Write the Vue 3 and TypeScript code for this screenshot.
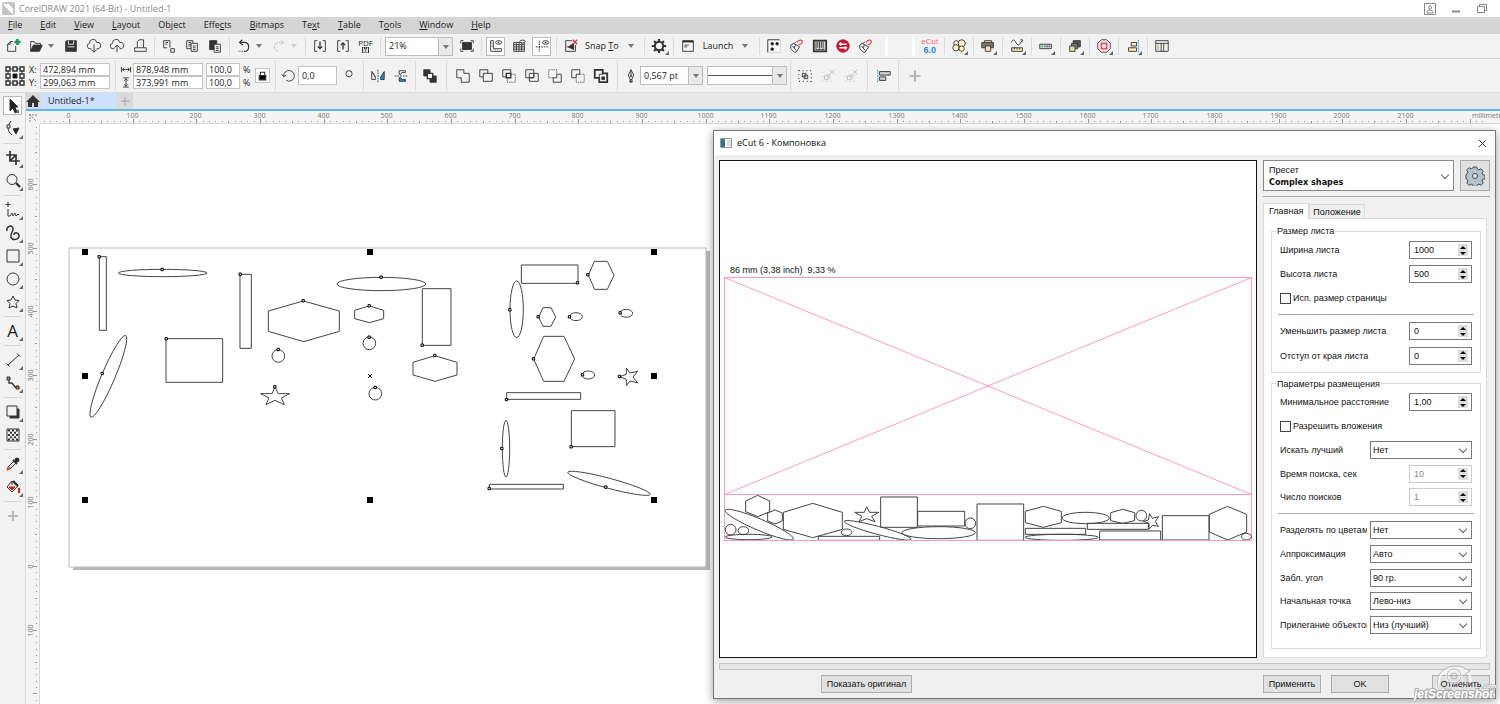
<script setup lang="ts">
import { ref } from 'vue'

interface Item {
  kind: 'icon' | 'sep' | 'arrow' | 'gap' | 'zoom' | 'text' | 'pdf' | 'ecut'
  icon?: string
  label?: string
  on?: boolean
  fly?: boolean
  dim?: boolean
}

const icon = (name: string, label: string, extra: Partial<Item> = {}): Item => ({ kind: 'icon', icon: name, label, ...extra })
const sep: Item = { kind: 'sep' }
const arrow: Item = { kind: 'arrow', label: 'More' }

const menus: [string, string, string][] = [
  ['', 'F', 'ile'], ['', 'E', 'dit'], ['', 'V', 'iew'], ['', 'L', 'ayout'], ['Ob', 'j', 'ect'], ['Effe', 'c', 'ts'],
  ['', 'B', 'itmaps'], ['Te', 'x', 't'], ['', 'T', 'able'], ['T', 'o', 'ols'], ['', 'W', 'indow'], ['', 'H', 'elp'],
]

const icons: Record<string, string> = {
  newDoc: '<path d="M9 4H6L3 7v8h9V9M6 4v3H3"/><path d="M14 1v7M10.500 4.500h7" stroke="#12a150" stroke-width="3"/>',
  open: '<path d="M3 15V4h4l1 2h6v2"/><path d="M3 15l3-7h10l-3 7z" fill="#333"/>',
  save: '<path d="M4 3h11v12H3V4z" fill="#333"/><path d="M6 3v4h6V3M5 10h8" stroke="#f2f2f2"/>',
  cloudDown: '<path d="M6 12H5a3 3 0 0 1-1-6 4 4 0 0 1 8-1 3.500 3.500 0 0 1 2 7h-2"/><path d="M9 7v9M6 13l3 3 3-3"/>',
  cloudUp: '<path d="M6 12H5a3 3 0 0 1-1-6 4 4 0 0 1 8-1 3.500 3.500 0 0 1 2 7h-2"/><path d="M9 16V8M6 11l3-3 3 3"/>',
  print: '<path d="M3 15h13v-4H3zM6 11V4l2-2h5v9"/>',
  cut: '<path d="M3 3h7v6M3 3v8h4M5 5h3M5 7h2M11 12h4v4h-4zM9 10h2"/>',
  copy: '<path d="M3 3h7v9H3zM5 5h3M5 7h3M5 9h3"/><path d="M8 6h7v9H8zM10 9h3M10 11h3M10 13h3" fill="#f2f2f2"/>',
  paste: '<path d="M3 3h8v10H3z" fill="#333"/><path d="M8 7h7v9H8zM10 10h3M10 12h3M10 14h3" fill="#f2f2f2"/>',
  undo: '<path d="M7 2L4 5l4 3M4 5h5c7 0 7 10 0 10" stroke-width="1.300"/><path d="M8 15H3" stroke-dasharray="1 1"/>',
  redo: '<path d="M11 2l3 3-4 3M14 5H9c-7 0-7 10 0 10" stroke-dasharray="2 1"/>',
  imp: '<path d="M6 3H3v12h3M12 3h3v12h-3"/><path d="M9 4v8M6.500 9.500L9 12l2.500-2.500" stroke-width="1.500"/>',
  exp: '<path d="M6 3H3v12h3M12 3h3v12h-3"/><path d="M9 13V5M6.500 8L9 5.500 11.500 8" stroke-width="1.500"/>',
  full: '<path d="M2 6V3h3M13 3h3v3M16 12v3h-3M5 15H2v-3"/><path d="M4 5h10v8H4z" fill="#333"/>',
  rulers: '<path d="M3 3h3v9h9v3H3zM4 6h1M4 9h1M8 13v1M11 13v1"/><ellipse cx="12" cy="5" rx="3.500" ry="2"/><circle cx="12" cy="5" r=".6"/>',
  grid: '<path d="M3 5h12v10H3zM3 7.500h12M3 10h12M3 12.500h12M6 5v10M9 5v10M12 5v10"/><ellipse cx="13" cy="4" rx="3" ry="1.600" fill="#f2f2f2"/>',
  guides: '<path d="M2 10h14M6 3v13" stroke-dasharray="2 1"/><ellipse cx="13" cy="5" rx="3.500" ry="2"/><circle cx="13" cy="5" r=".6"/>',
  snapOff: '<path d="M10 3H3v12h11V8"/><path d="M12 6L6 10l6 3zM4 10h3" fill="#333"/><path d="M11 2l5 5M16 2l-5 5" stroke="#f0332f" stroke-width="1.400"/>',
  gear: '<circle cx="9" cy="9" r="4.700" stroke-width="2.200"/><path d="M9 1v3M9 14v3M1 9h3M14 9h3M3.500 3.500l2 2M12.500 12.500l2 2M3.500 14.500l2-2M12.500 5.500l2-2" stroke-width="2.400"/>',
  launch: '<path d="M3 3h12v12H3z"/><path d="M3 4h12" stroke-width="2"/><path d="M5 8h5M5 10h3"/>',
  dots: '<path d="M2 16V2h14v14z" fill="#fff" stroke="#ccc"/><path d="M2 16V2h13"/><g fill="#000"><circle cx="7" cy="6.500" r="1.500"/><circle cx="12.500" cy="6.500" r="1.500"/><circle cx="7" cy="12.500" r="1.500"/></g>',
  plug: '<path d="M2 8l3-2 7 4-4 6H6l-4-4zM4 9l4 5M7 8l-1 3M8 4l-3 3"/><path d="M9 5c2-4 7-3 6 0-1 2-3 3-4 2" stroke="#ef4444" stroke-width="1.300"/>',
  barcode: '<path d="M2 3h14v12H2z" stroke-width="2" fill="#ddd"/><path d="M4.500 4v8M6.500 4v7M8.500 4v8M10.500 4v7M12.500 4v8M4 13h10"/>',
  swap: '<circle cx="9" cy="9" r="7" fill="#c4122f" stroke="#c4122f"/><path d="M5 7h8M7 5L5 7l2 1.500M5 11h8M11 9.500l2 1.500-2 2" stroke="#fff" stroke-width="1.500"/>',
  circles: '<g fill="#fff3c4"><circle cx="6" cy="6" r="3"/><circle cx="12" cy="6" r="4"/><circle cx="5.500" cy="11" r="3.500"/><circle cx="12" cy="12" r="3"/></g>',
  printer2: '<path d="M2 5h13v6H2z" fill="#777"/><path d="M5 3h8v2H5zM6 9h6v6H6z" fill="#f8e9b0"/>',
  measure: '<path d="M2 5l3-3c2 0 3 6 6 6l4-5M13 2h2v2"/><path d="M3 11h12v4H3zM6 11v2M9 11v2M12 11v2" fill="#f8e9b0"/>',
  leds: '<path d="M2 7h13v5H2z" fill="#ddd"/><path d="M4 9.500h1.500M7 9.500h1.500" stroke="#1c9b57" stroke-width="2"/><path d="M9.500 9.500H11M12 9.500h1.500" stroke="#713a8c" stroke-width="2"/>',
  stack: '<path d="M7 3h8v7H7z" fill="#555"/><path d="M5 6h7v6H5z" fill="#777"/><path d="M3 9h6v6H3z" fill="#e9dfae"/>',
  octagon: '<path d="M6 2h6l4 4v6l-4 4H6l-4-4V6z"/><path d="M6 6h6v6H6z" fill="#fff" stroke="#ff4560" stroke-width="1.800"/>',
  align2: '<path d="M15 2v14" stroke="#1691d0" stroke-dasharray="2 1"/><path d="M7 5h6v4H7zM4 11h9v4H4z" fill="#f8e9b0"/>',
  table: '<path d="M2 3h14v12H2zM2 6h14M8 6v9M11 6v9"/><path d="M3 7h3v7H3z" fill="#d5cdb5" stroke="none"/>',
  origin: '<path d="M3 3h14v14H3z"/><g fill="#f2f2f2"><path d="M1 1h4v4H1zM8 1h4v4H8zM15 1h4v4h-4zM1 8h4v4H1zM15 8h4v4h-4zM1 15h4v4H1zM8 15h4v4H8zM15 15h4v4h-4z" stroke-width="1.400"/></g><path d="M8 8h4v4H8z" fill="#000"/>',
  rotate: '<path d="M3 9a6 6 0 1 1 3 5M1 7l2 3 3-2"/>',
  mirrorH: '<path d="M9 2v14" stroke-dasharray="2 1"/><path d="M2 4v9h4v-3zM2 4l4 6"/><path d="M16 4v9h-4v-3z" fill="#1691d0"/>',
  mirrorV: '<path d="M2 9h14" stroke-dasharray="2 1"/><path d="M14 3H7v4h2l1-2h4z"/><path d="M14 15H7v-4h2l1 2h4z" fill="#1691d0"/>',
  order: '<path d="M2 2h7v7H2zM9 9h7v7H9z" fill="#333"/><path d="M6 6h6v6H6z" fill="#f2f2f2" stroke-width="1.500"/>',
  weld: '<path d="M2 2h8v4h6v10H7v-5H2z"/>',
  trim: '<path d="M6 10H2V2h9v4"/><path d="M6 6h10v9H6z"/>',
  intersect: '<path d="M6 10H2V2h9v4"/><path d="M6 6h5v5H6z" stroke-width="1.500"/><path d="M11 7h5v9H7v-5" stroke-dasharray="1 1"/>',
  simplify: '<path d="M2 2h9v9H2z"/><path d="M6 6h10v9H6zM6 11h5V6"/>',
  front: '<path d="M7 11H2V2h9v4" stroke-dasharray="1 1"/><path d="M11 7h5v9H7v-5h4z"/>',
  back: '<path d="M7 11H2V2h9v5H7z"/><path d="M11 7h5v9H7v-5" stroke-dasharray="1 1"/>',
  boundary: '<path d="M2 2h9v4h5v10H7v-5H2z" stroke-width="2"/><path d="M10 10h3v3h-3z" fill="#333"/><path d="M7 10V7h4"/>',
  pen: '<path d="M9 2L6 8l2 5h2l2-5zM9 2v6M7 15h4M8 13v3h2v-3"/><circle cx="9" cy="9" r="1"/>',
  group: '<path d="M2 3h14v12H2z" stroke-dasharray="1 3.300" stroke-width="1.300"/><path d="M6 6h4v4H6zM8 8h4v4H8z"/>',
  ungroup: '<path d="M3 4v11h11" stroke-dasharray="1 4"/><path d="M5 9h4v4H5zM7 8h4v4M11 2l5 5M16 2l-5 5"/>',
  alignL: '<path d="M2 2v14" stroke="#1691d0" stroke-dasharray="2 1"/><path d="M4 4h12v4H4zM4 10h7v4H4z" fill="#ccc"/>',
  plus: '<path d="M9 4v10M4 9h10" stroke="#aaa" stroke-width="1.500"/>',
  pick: '<path d="M6 2v12l3-3 2 5 2-1-2-5h3z" fill="#222"/>',
  shape: '<path d="M7 1c-4 5-4 10 1 14"/><path d="M3 5h3v3H3z" fill="#f2f2f2"/><path d="M9 9l6-1-3 6z" fill="#222"/>',
  crop: '<path d="M6 2v10h10M2 6h10v10M6 12l6-6" stroke-width="1.700"/>',
  lens: '<circle cx="8" cy="7.500" r="5"/><path d="M12 11l4 4" stroke-width="2.400"/>',
  freehand: '<path d="M4 1v5M1.500 3.500h5M4 8v7h2c1 0 1-3 2-3s0 3 1 3 1-3 2-3 0 3 1 3l2-2 1 1"/>',
  artistic: '<path d="M3 7c-1-5 6-7 6-2 0 3-3 5-2 8 1 4 9 3 8-2-1-3-5-3-5 0" stroke-width="1.500"/>',
  rect: '<path d="M3 3h12v12H3z"/>',
  ellipse: '<circle cx="9" cy="9" r="6"/>',
  star: '<path d="M9 3l2 4 4 .5-3 3 1 4.500-4-2-4 2 1-4.500-3-3L7 7z"/>',
  line: '<path d="M4 14L15 4M2.500 12.500l3 3M13 2.500l3 3"/>',
  connector: '<path d="M5 5v4h3l3 4h3" stroke-width="1.300"/><path d="M3 3h3v3H3zM12 12h3v3h-3z" fill="#f26522"/>',
  shadow: '<path d="M6 6h9v9H6z" fill="#333"/><path d="M3 3h10v10H3z" fill="#f2f2f2"/>',
  checker: '<path d="M3 3h12v12H3z"/><path d="M4 4.500h10M4 9h10M4 13.500h10" stroke-width="2" stroke-dasharray="2 2"/><path d="M6 6.700h8M6 11.300h8" stroke-width="2" stroke-dasharray="2 2"/>',
  dropper: '<path d="M3 15l1-3 6-6 2 2-6 6z"/><path d="M3 15l3-3" stroke="#f26522" stroke-width="2"/><circle cx="13" cy="5" r="2" fill="#222"/><path d="M9 5l4 4" stroke-width="2"/>',
  fill: '<path d="M8 3l6 5-6 6-5-5zM8 3v4"/><path d="M5 9h6l-3 3z" fill="#f01010" stroke="#f01010"/><path d="M15 10v5" stroke="#f01010" stroke-width="2"/><path d="M9 3l5 5" stroke-width="2.400"/>',
}

const standardBar: Item[] = [
  icon('newDoc', 'New'), icon('open', 'Open'), arrow, icon('save', 'Save'), icon('cloudDown', 'Cloud download'),
  icon('cloudUp', 'Cloud upload'), icon('print', 'Print'), sep, icon('cut', 'Cut'), icon('copy', 'Copy'), icon('paste', 'Paste'), sep,
  icon('undo', 'Undo'), arrow, icon('redo', 'Redo', { dim: true }), { ...arrow, dim: true }, sep,
  icon('imp', 'Import'), icon('exp', 'Export'), { kind: 'pdf', label: 'PDF' }, sep, { kind: 'zoom' }, icon('full', 'Full screen'), sep,
  icon('rulers', 'Rulers', { on: true }), icon('grid', 'Grid'), icon('guides', 'Guidelines', { on: true }), sep,
  icon('snapOff', 'Snap off'), { kind: 'text', label: 'Snap To' }, arrow, { kind: 'gap' }, sep, icon('gear', 'Options', { fly: true }), sep,
  icon('launch', 'Launch'), { kind: 'text', label: 'Launch' }, arrow, { kind: 'gap' }, sep,
  icon('dots', 'Dots'), icon('plug', 'Plug-in'), icon('barcode', 'Barcode'), icon('swap', 'Swap'), icon('plug', 'Second plug-in'),
]
const macroBar: Item[] = [
  { kind: 'ecut', label: 'eCut 6.0' }, sep, icon('circles', 'Nesting', { fly: true }), sep, icon('printer2', 'Plot', { fly: true }), sep,
  icon('measure', 'Measure', { fly: true }), sep, icon('leds', 'Lights', { fly: true }), sep, icon('stack', 'Volume', { fly: true }), sep,
  icon('octagon', 'Contour', { fly: true }), sep, icon('align2', 'Arrange', { fly: true }), sep, icon('table', 'Report'),
]
const tools: Item[] = [
  icon('pick', 'Pick', { on: true, fly: true }), icon('shape', 'Shape', { fly: true }), sep, icon('crop', 'Crop', { fly: true }), icon('lens', 'Zoom', { fly: true }), sep,
  icon('freehand', 'Freehand', { fly: true }), icon('artistic', 'Artistic media', { fly: true }), icon('rect', 'Rectangle', { fly: true }),
  icon('ellipse', 'Ellipse', { fly: true }), icon('star', 'Polygon', { fly: true }), sep, { kind: 'text', label: 'A', fly: true }, sep,
  icon('line', 'Dimension', { fly: true }), icon('connector', 'Connector', { fly: true }), sep, icon('shadow', 'Drop shadow', { fly: true }), icon('checker', 'Transparency'), sep,
  icon('dropper', 'Eyedropper', { fly: true }), icon('fill', 'Fill', { fly: true }), sep, icon('plus', 'Add tool'),
]
const shaping = ['weld', 'trim', 'intersect', 'simplify', 'front', 'back', 'boundary']

/* Rulers: 100 mm spans 63.67 px at the current zoom */
const unit = 63.67
const allH = Array.from({ length: 227 }, (_, i) => ({ x: Math.round(29 + ((i - 4) * unit) / 10) + 0.5, n: (i - 4) * 10 }))
const vTicks = Array.from({ length: 91 }, (_, i) => ({ y: Math.round(443 - ((i - 21) * unit) / 10) - 0.5, n: (i - 21) * 10 }))

/* Drawing geometry, three drawing units per pixel */
type Pt = [number, number]
interface Shape { t: 'r' | 'e' | 'p'; a?: number[]; p?: string; rot?: number; n?: Pt }
const r = (x1: number, y1: number, x2: number, y2: number, n?: Pt): Shape => ({ t: 'r', a: [x1, y1, x2 - x1, y2 - y1], n })
const e = (cx: number, cy: number, rx: number, ry: number, n?: Pt, rot = 0): Shape => ({ t: 'e', a: [cx, cy, rx, ry], n, rot })
const p = (pts: string, n?: Pt): Shape => ({ t: 'p', p: pts, n })

const leftShapes: Shape[] = [
  r(118, 50, 139, 271, [118, 51]), e(308, 99, 133, 11, [307, 89]), r(540, 103, 574, 325, [541, 103]), e(964, 132, 133, 20, [964, 112]),
  r(1087, 146, 1173, 316, [1087, 316]), r(318, 296, 488, 427, [319, 297]),
  p('730,183 838,213 838,274 731,305 625,274 625,213', [730, 183]),
  p('928,198 971,211 971,236 928,248 884,236 884,211', [928, 198]),
  p('1125,347 1191,367 1191,405 1125,424 1059,405 1059,367', [1125, 347]),
  e(655, 348, 19, 19, [655, 329]), e(928, 310, 19, 19, [928, 292]), e(946, 461, 19, 19, [946, 443]),
  p('645,441 655,461 689,461 664,474 673,494 645,481 618,494 627,474 602,461 636,461', [645, 441]),
  e(145, 409, 133, 20, [127, 401], -67),
]
const rightShapes: Shape[] = [
  r(154, 75, 324, 130, [323, 129]), p('355,106 373,64 412,64 432,106 412,148 374,148', [354, 105]), e(140, 208, 20, 85, [120, 210]),
  p('206,231 219,203 243,203 257,231 243,259 219,259', [205, 231]), e(318, 230, 19, 12, [299, 231]), e(469, 220, 19, 12, [451, 219]),
  p('191,357 221,289 282,289 314,357 282,424 221,424', [191, 357]), e(355, 405, 19, 12, [338, 405]),
  p('469,384 479,399 503,394 489,411 503,429 480,423 469,437 469,418 449,410 469,403', [449, 410]),
  r(110, 458, 332, 478, [110, 479]), r(304, 512, 435, 620, [304, 621]), e(108, 626, 11, 85, [96, 626]), r(58, 733, 280, 747, [58, 746]),
  e(417, 730, 128, 15, [408, 742], 15),
]
const nestA: Shape[] = [
  p('128,46 164,63 164,95 128,110 92,95 92,63'), p('180,90 202,99 202,123 180,132 158,123 158,99'),
  p('293,70 382,97 382,148 293,173 205,148 205,97'), e(133, 134, 111, 17, undefined, 23), e(47, 149, 16, 16), e(85, 152, 16, 12), e(101, 171, 70, 8),
  p('455,80 464,97 491,97 470,109 480,125 455,116 432,125 441,109 419,97 448,97'), e(488, 151, 104, 12, undefined, 15), e(395, 157, 16, 10),
  r(310, 169, 494, 181), r(497, 51, 607, 142), r(608, 94, 749, 138), e(766, 130, 16, 16), e(671, 158, 110, 18), r(786, 72, 926, 181),
]
const nestB: Shape[] = [
  p('130,79 184,94 184,128 130,142 76,128 76,94'), e(257, 114, 71, 17), p('368,88 404,98 404,122 368,130 332,122 332,98'), e(424, 107, 16, 16),
  p('449,101 457,115 476,110 466,124 475,139 458,136 447,147 447,130 430,124 445,120'), r(76, 145, 257, 163), r(262, 130, 445, 148),
  e(185, 172, 110, 9), r(299, 153, 482, 180), r(487, 107, 627, 180), p('683,79 740,103 740,156 683,180 628,156 628,103'), e(739, 170, 15, 10),
]
const canvasGroups = [{ at: 'translate(20 116)', shapes: leftShapes }, { at: 'translate(430 116)', shapes: rightShapes }]
const nestGroups = [{ at: 'translate(-5 319)', shapes: nestA }, { at: 'translate(280 319)', shapes: nestB }]
const handles: Pt[] = [[85, 252], [370, 252], [654, 252], [85, 376], [654, 376], [85, 500], [370, 500], [654, 500]]
const usage = '86 mm (3,38 inch)\u00a0 9,33 %'

type Row = { id: string; label: string; kind: 'spin' | 'check' | 'select' | 'hr'; value?: string; off?: boolean }
const sheetRows: Row[] = [
  { id: 'w', label: 'Ширина листа', kind: 'spin', value: '1000' }, { id: 'h', label: 'Высота листа', kind: 'spin', value: '500' },
  { id: 'page', label: 'Исп. размер страницы', kind: 'check' }, { id: 'hr1', label: '', kind: 'hr' },
  { id: 'shrink', label: 'Уменьшить размер листа', kind: 'spin', value: '0' }, { id: 'edge', label: 'Отступ от края листа', kind: 'spin', value: '0' },
]
const placeRows: Row[] = [
  { id: 'min', label: 'Минимальное расстояние', kind: 'spin', value: '1,00' }, { id: 'nest', label: 'Разрешить вложения', kind: 'check' },
  { id: 'best', label: 'Искать лучший', kind: 'select', value: 'Нет' }, { id: 'time', label: 'Время поиска, сек', kind: 'spin', value: '10', off: true },
  { id: 'count', label: 'Число поисков', kind: 'spin', value: '1', off: true }, { id: 'hr2', label: '', kind: 'hr' },
  { id: 'colors', label: 'Разделять по цветам', kind: 'select', value: 'Нет' }, { id: 'approx', label: 'Аппроксимация', kind: 'select', value: 'Авто' },
  { id: 'angle', label: 'Забл. угол', kind: 'select', value: '90 гр.' }, { id: 'start', label: 'Начальная точка', kind: 'select', value: 'Лево-низ' },
  { id: 'fit', label: 'Прилегание объектов', kind: 'select', value: 'Низ (лучший)' },
]
const groups = [{ title: 'Размер листа', rows: sheetRows }, { title: 'Параметры размещения', rows: placeRows }]
const tab = ref('main')
</script>

<template>
  <div class="app">
    <header class="title">
      <svg class="logo" viewBox="0 0 13 13"><rect width="13" height="13" rx="2" fill="#c4c4c4" /><path d="M2 2l9 9M5 2l6 6" stroke="#fff" stroke-width="2" /></svg>
      <span>CorelDRAW 2021 (64-Bit) - Untitled-1</span>
      <div class="win">
        <button aria-label="Account"><svg viewBox="0 0 12 12"><path d="M.5.5h11v11H.5z" /><circle cx="6" cy="4.500" r="1.500" /><path d="M3 10c0-4 6-4 6 0z" /></svg></button>
        <button aria-label="Minimize"><svg viewBox="0 0 12 12"><path d="M2 8.500h8" stroke-width="2" /></svg></button>
        <button aria-label="Restore"><svg viewBox="0 0 12 12"><path d="M1.500 3.500h7v6h-7zM3.500 3.500v-2h7v6h-2" /></svg></button>
      </div>
    </header>
    <nav class="menu">
      <button v-for="m in menus" :key="m.join('')">{{ m[0] }}<u>{{ m[1] }}</u>{{ m[2] }}</button>
    </nav>

    <div class="bar">
      <template v-for="(bar, b) in [standardBar, macroBar]" :key="b">
        <div v-if="b === 1" class="dock"></div>
        <template v-for="(it, i) in bar" :key="b + '-' + i">
          <i v-if="it.kind === 'sep'" class="sep"></i>
          <i v-else-if="it.kind === 'gap'" class="gap"></i>
          <button v-else-if="it.kind === 'arrow'" class="arrow" :class="{ dim: it.dim }" :aria-label="it.label"></button>
          <span v-else-if="it.kind === 'zoom'" class="combo zoom"><select aria-label="Zoom"><option>21%</option></select></span>
          <button v-else-if="it.kind === 'text'" class="word"><template v-if="it.label === 'Snap To'">Snap <u>T</u>o</template><template v-else>{{ it.label }}</template></button>
          <button v-else-if="it.kind === 'pdf'" class="cell pdf">PDF<svg viewBox="0 0 8 6"><path d="M1 0h6v6H1zM3 0v2h2V0M3 4h2" fill="none" stroke="#333" /></svg></button>
          <button v-else-if="it.kind === 'ecut'" class="cell ecut"><span>eCut</span><b>6.0</b></button>
          <button v-else class="cell" :class="{ on: it.on, fly: it.fly, dim: it.dim }" :aria-label="it.label"><svg viewBox="0 0 18 18" v-html="icons[it.icon!]"></svg></button>
        </template>
      </template>
    </div>

    <div class="bar props">
      <button class="cell wide" aria-label="Object origin"><svg viewBox="0 0 20 20" v-html="icons.origin"></svg></button>
      <div class="stack tags"><label for="px">X:</label><label for="py">Y:</label></div>
      <div class="stack w70"><input id="px" value="472,894 mm"><input id="py" value="299,063 mm"></div>
      <i class="sep wide-sep"></i>
      <div class="stack dims">
        <svg viewBox="0 0 12 12"><path d="M1 3v6M11 3v6M2 6h8M4 4L2 6l2 2M8 4l2 2-2 2" /></svg>
        <svg viewBox="0 0 12 12"><path d="M3 1h6M3 11h6M6 2v8M4 4l2-2 2 2M4 8l2 2 2-2" /></svg>
      </div>
      <div class="stack w70"><input aria-label="Width" value="878,948 mm"><input aria-label="Height" value="373,991 mm"></div>
      <div class="stack w34"><input aria-label="Scale X" value="100,0"><input aria-label="Scale Y" value="100,0"></div>
      <div class="stack tags"><span>%</span><span>%</span></div>
      <button class="lock" aria-label="Lock ratio"><svg viewBox="0 0 12 12"><path d="M3 6h6v4H3z" fill="#000" /><path d="M4 6V3h4v3" /></svg></button>
      <i class="sep wide-sep"></i>
      <div class="cell slim"><svg viewBox="0 0 18 18" v-html="icons.rotate"></svg></div>
      <input class="angle" aria-label="Rotation" value="0,0">
      <div class="cell"><svg viewBox="0 0 18 18"><circle cx="9" cy="6.500" r="3.500" /></svg></div>
      <i class="sep"></i>
      <button class="cell" aria-label="Mirror horizontally"><svg viewBox="0 0 18 18" v-html="icons.mirrorH"></svg></button>
      <button class="cell" aria-label="Mirror vertically"><svg viewBox="0 0 18 18" v-html="icons.mirrorV"></svg></button>
      <i class="sep"></i>
      <button class="cell" aria-label="Order"><svg viewBox="0 0 18 18" v-html="icons.order"></svg></button>
      <i class="sep wide-sep"></i>
      <button v-for="s in shaping" :key="s" class="cell" :aria-label="s"><svg viewBox="0 0 18 18" v-html="icons[s]"></svg></button>
      <i class="sep wide-sep"></i>
      <div class="cell slim"><svg viewBox="0 0 18 18" v-html="icons.pen"></svg></div>
      <span class="combo weight"><select aria-label="Outline width"><option>0,567 pt</option></select></span>
      <span class="combo style"><select aria-label="Line style"><option></option></select></span>
      <i class="sep"></i>
      <button class="cell" aria-label="Group"><svg viewBox="0 0 18 18" v-html="icons.group"></svg></button>
      <button class="cell dim" aria-label="Ungroup"><svg viewBox="0 0 18 18" v-html="icons.ungroup"></svg></button>
      <button class="cell dim" aria-label="Ungroup all"><svg viewBox="0 0 18 18" v-html="icons.ungroup"></svg></button>
      <i class="sep wide-sep"></i>
      <button class="cell" aria-label="Align"><svg viewBox="0 0 18 18" v-html="icons.alignL"></svg></button>
      <i class="sep"></i>
      <button class="cell wide" aria-label="Customize"><svg viewBox="0 0 18 18" v-html="icons.plus"></svg></button>
    </div>

    <div class="work">
      <aside class="tools">
        <template v-for="(it, i) in tools" :key="i">
          <i v-if="it.kind === 'sep'" class="hsep"></i>
          <button v-else class="tool" :class="{ on: it.on, fly: it.fly }" :aria-label="it.label">
            <span v-if="it.kind === 'text'" class="big">{{ it.label }}</span>
            <svg v-else viewBox="0 0 18 18" v-html="icons[it.icon!]"></svg>
          </button>
        </template>
      </aside>

      <main class="doc">
        <div class="tabs">
          <button class="home" aria-label="Welcome"><svg viewBox="0 0 14 14"><path d="M7 1L0 8h2v5h4V9h2v4h4V8h2z" fill="#333" /></svg></button>
          <button class="doctab">Untitled-1*</button>
          <button class="addtab" aria-label="New tab"><svg viewBox="0 0 12 12"><path d="M6 1v10M1 6h10" stroke="#aaa" stroke-width="1.500" /></svg></button>
        </div>
        <div class="stage">
          <div class="corner"><svg viewBox="0 0 14 14"><path d="M3 4h8M4 3v8M4 4l6 6" stroke="#888" fill="none" stroke-dasharray="2 1" /></svg></div>
          <svg class="hruler">
            <g v-for="t in allH" :key="t.n">
              <line :x1="t.x" :x2="t.x" :y1="t.n % 100 === 0 ? 8 : 10" :y2="t.n % 100 === 0 ? 12 : t.n % 50 === 0 ? 12 : 11" />
              <text v-if="t.n % 100 === 0 && t.n < 2200" :x="t.x - 1" y="7">{{ t.n }}</text>
            </g>
            <text class="start" x="1432" y="7">millimeters</text>
          </svg>
          <svg class="vruler">
            <g v-for="t in vTicks" :key="t.n">
              <line :y1="t.y" :y2="t.y" :x1="t.n % 100 === 0 ? 7 : t.n % 50 === 0 ? 9 : 10" x2="11" />
              <text v-if="t.n % 100 === 0 && t.n > -200" :transform="`translate(7 ${t.y}) rotate(-90)`">{{ Math.abs(t.n) }}</text>
            </g>
          </svg>
          <svg class="canvas">
            <path d="M666 127h4v319H33v-3h633z" fill="#b9b9b9" stroke="none" />
            <path d="M29 124h637v319H29z" fill="#fff" stroke="#bdbdbd" />
            <g v-for="g in canvasGroups" :key="g.at" :transform="g.at">
              <g transform="scale(.33333)" class="thin">
                <template v-for="(s, i) in g.shapes" :key="i">
                  <rect v-if="s.t === 'r'" :x="s.a![0]" :y="s.a![1]" :width="s.a![2]" :height="s.a![3]" />
                  <ellipse v-else-if="s.t === 'e'" :cx="s.a![0]" :cy="s.a![1]" :rx="s.a![2]" :ry="s.a![3]" :transform="`rotate(${s.rot} ${s.a![0]} ${s.a![1]})`" />
                  <polygon v-else :points="s.p" />
                </template>
                <rect v-for="(s, i) in g.shapes" :key="'n' + i" class="node" :x="s.n![0] - 4" :y="s.n![1] - 4" width="7" height="7" />
              </g>
            </g>
            <rect v-for="h in handles" :key="h.join()" class="handle" :x="h[0] - 43" :y="h[1] - 127" width="6" height="6" />
            <path d="M328 250l4 4M332 250l-4 4" stroke="#000" />
          </svg>
        </div>
      </main>
    </div>

    <section class="dialog" role="dialog" aria-label="eCut 6 - Компоновка">
      <header class="dtitle">
        <svg class="dicon" viewBox="0 0 12 10"><path d="M.5.5h11v9H.5z" fill="#fff" stroke="#999" /><path d="M1 1h4v8H1z" fill="#2c7d86" /><path d="M7 3h4M7 5h4M7 7h4" stroke="#bbb" /></svg>
        <span>eCut 6 - Компоновка</span>
        <button aria-label="Close"><svg viewBox="0 0 10 10"><path d="M1 1l8 8M9 1L1 9" stroke="#222" /></svg></button>
      </header>
      <div class="dbody">
        <svg class="preview">
          <text x="10" y="112">{{ usage }}</text>
          <path class="pink" d="M4.500 116.500h527v263h-527zM4.500 333.500h527M4.500 116.500l527 217M531.500 116.500l-527 217" />
          <g v-for="g in nestGroups" :key="g.at" :transform="g.at">
            <g transform="scale(.33333)" class="thin">
              <template v-for="(s, i) in g.shapes" :key="i">
                <rect v-if="s.t === 'r'" :x="s.a![0]" :y="s.a![1]" :width="s.a![2]" :height="s.a![3]" />
                <ellipse v-else-if="s.t === 'e'" :cx="s.a![0]" :cy="s.a![1]" :rx="s.a![2]" :ry="s.a![3]" :transform="`rotate(${s.rot} ${s.a![0]} ${s.a![1]})`" />
                <polygon v-else :points="s.p" />
              </template>
            </g>
          </g>
          <path class="pink" d="M4.500 379.500h527" />
        </svg>
        <div class="panel">
          <div class="presetrow">
            <div class="preset chev"><label for="preset">Пресет</label><select id="preset"><option>Complex shapes</option></select></div>
            <button class="gearbtn" aria-label="Настройки">
              <svg viewBox="0 0 20 20"><path d="M8.300 1h3.400l.6 2.200 1.600.7 2-1.200 2.400 2.400-1.200 2 .7 1.600 2.200.6v3.400l-2.200.6-.7 1.600 1.200 2-2.400 2.400-2-1.200-1.600.7-.6 2.200H8.300l-.6-2.200-1.600-.7-2 1.200-2.400-2.400 1.200-2-.7-1.600L1 12.700V8.300l1.200-.6.7-1.600-1.200-2 2.400-2.400 2 1.200 1.600-.7z" fill="#b4c2cb" stroke="#3d4b55" /><circle cx="10" cy="10" r="2.500" fill="#eee" stroke="#3d4b55" /></svg>
            </button>
          </div>
          <hr>
          <div class="dtabs">
            <button :class="{ cur: tab === 'main' }" @click="tab = 'main'">Главная</button>
            <button :class="{ cur: tab === 'pos' }" @click="tab = 'pos'">Положение</button>
          </div>
          <div class="pane">
            <fieldset v-for="(g, gi) in groups" :key="g.title" :class="gi ? 'place' : 'sheet'">
              <legend>{{ g.title }}</legend>
              <div class="rows">
                <template v-for="row in g.rows" :key="row.id">
                  <div v-if="row.kind === 'hr'" class="rule"></div>
                  <label v-else-if="row.kind === 'check'" class="row check"><input type="checkbox">{{ row.label }}</label>
                  <div v-else class="row">
                    <label :for="row.id">{{ row.label }}</label>
                    <span v-if="row.kind === 'spin'" class="spin" :class="{ off: row.off }">
                      <input :id="row.id" :value="row.value" :disabled="row.off">
                      <span class="ud"><button aria-label="Больше"></button><button aria-label="Меньше"></button></span>
                    </span>
                    <span v-else class="drop chev"><select :id="row.id"><option>{{ row.value }}</option></select></span>
                  </div>
                </template>
              </div>
            </fieldset>
          </div>
        </div>
      </div>
      <div class="progress"></div>
      <footer class="foot">
        <div class="orig"><button class="showbtn">Показать оригинал</button></div>
        <div class="acts"><button>Применить</button><button>OK</button><button>Отменить</button></div>
      </footer>
    </section>

    <svg class="mark" viewBox="0 0 86 42">
      <g fill="none" stroke="#fff" stroke-width="3" opacity=".7"><path d="M24 26C22 14 34 4 46 7c8 2 12 8 10 15" /><circle cx="40" cy="15" r="7" /></g>
      <g fill="none" stroke="#b5b5b5"><path d="M24 26C20 12 34 2 48 6l8 4-5 3c5 6 2 12-3 14" /><circle cx="40" cy="15" r="7" /><circle cx="40" cy="15" r="3" /><path d="M28 25c2 3 6 4 10 3" /></g>
      <text x="0" y="37">jetScreenshot</text>
      <text class="com" x="68" y="27">.com</text>
    </svg>
  </div>
</template>

<style>
html, body, #app { height: 100%; margin: 0; }
body { overflow: hidden; }
</style>

<style scoped>
* { box-sizing: border-box; }
.app { position: relative; display: flex; flex-direction: column; height: 100vh; overflow: hidden; background: #f2f2f2; color: #1c1c1c; font: 9px/12px "Open Sans", "Noto Sans", sans-serif; }
button, input, select { margin: 0; padding: 0; border: 0; background: none; color: inherit; font: inherit; border-radius: 0; }
select { appearance: none; width: 100%; }
svg { fill: none; stroke: #333; }
u { text-underline-offset: 1px; }
.title { display: flex; align-items: center; gap: 4px; height: 17px; flex: none; padding: 0 12px 0 2px; background: #fff; color: #888; font-size: 9px; }
.logo { width: 13px; height: 13px; stroke: none; }
.win { display: flex; gap: 14px; margin-left: auto; }
.win svg { display: block; width: 12px; height: 12px; stroke: #888; }
.menu { display: flex; flex: none; gap: 18px; height: 17px; padding: 0 8px 2px; background: #d5d5d5; }
.bar { display: flex; flex: none; align-items: center; height: 25px; padding-left: 1px; border-bottom: 1px solid #d6d6d6; white-space: nowrap; }
.props { height: 34px; border-color: #dcdcdc; }
.cell { position: relative; display: flex; flex: none; align-items: center; justify-content: center; width: 23px; height: 20px; }
.cell svg { flex: none; width: 16px; height: 16px; }
.cell.wide { width: 28px; }
.cell.wide svg { width: 20px; height: 20px; }
.cell.slim { width: 18px; }
.cell.on { width: 19px; margin: 0 2px; height: 19px; background: #fff; border: 1px solid #bdbdbd; }
.dim svg { stroke: #bcbcbc; }
.fly::after { content: ""; position: absolute; right: 2px; bottom: 1px; border: 2px solid; border-color: transparent #666 #666 transparent; }
.sep { flex: none; width: 6px; height: 18px; background: linear-gradient(#dadada, #dadada) center / 1px 100% no-repeat; }
.props .sep { height: 30px; }
.sep.wide-sep { width: 10px; }
.gap { width: 3px; }
.arrow { flex: none; width: 12px; height: 20px; }
.arrow::before { content: ""; display: block; width: 0; margin-left: 1px; border: 3px solid transparent; border-top: 4px solid #777; border-bottom: 0; }
.arrow.dim::before { border-top-color: #ccc; }
.word { padding: 0 8px 0 3px; }
.pdf { flex-direction: column; font-size: 8px; line-height: 8px; }
.cell.pdf svg { width: 9px; height: 6px; }
.ecut { flex-direction: column; color: #ff6b6b; font: 8px/8px "Liberation Sans", sans-serif; }
.ecut b { color: #1b87e6; font-size: 9px; }
.dock { width: 30px; height: 20px; margin: 0 3px 0 8px; border: solid #fff; border-width: 0 3px; }
.combo { position: relative; display: flex; height: 19px; border: 1px solid #bdbdbd; background: #fff; }
.combo select { padding-left: 3px; }
.combo::after { content: ""; width: 13px; flex: none; border-left: 1px solid #bdbdbd; background: #e9e9e9; }
.combo::before { content: ""; position: absolute; right: 3px; top: 7px; border: 3px solid transparent; border-top: 4px solid #777; border-bottom: 0; }
.zoom { width: 68px; margin: 0 2px; }
.weight { width: 63px; }
.style { width: 80px; margin-left: 4px; }
.style select { background: linear-gradient(#555, #555) center / 100% 1px no-repeat; }
.stack { display: flex; flex-direction: column; flex: none; height: 26px; }
.stack > * { height: 13px; line-height: 13px; }
.stack input { width: 100%; padding-left: 2px; border: 1px solid #c4c4c4; background: #fff; }
.tags { width: 11px; }
.w70 { width: 70px; }
.w34 { width: 34px; margin: 0 3px; }
.dims { width: 13px; }
.dims svg { width: 12px; padding: 1px 0; }
.lock { width: 15px; height: 15px; margin-left: 1px; border: 1px solid #c4c4c4; background: #fff; }
.lock svg { display: block; width: 13px; height: 13px; }
.angle { width: 39px; height: 19px; padding-left: 3px; border: 1px solid #c4c4c4; background: #fff; }
.work { display: flex; flex: 1; min-height: 0; }
.tools { display: flex; flex: none; flex-direction: column; width: 26px; padding-top: 1px; border-right: 1px solid #d8d8d8; }
.tool { position: relative; flex: none; display: flex; align-items: center; justify-content: center; width: 25px; height: 23px; }
.tool.on { width: 19px; height: 19px; margin: 2px 3px; background: #fff; border: 1px solid #bbb; }
.tool svg { width: 18px; height: 18px; flex: none; }
.big { font: 17px/20px "Open Sans", sans-serif; }
.hsep { flex: none; height: 6px; margin: 0 4px; background: linear-gradient(#d5d5d5, #d5d5d5) center / 100% 1px no-repeat; }
.doc { flex: 1; min-width: 0; display: flex; flex-direction: column; }
.tabs { display: flex; flex: none; height: 18px; background: #e8e8e8; border-bottom: 2px solid #5cbaea; }
.home { width: 15px; background: #d9d9d9; }
.home svg { display: block; width: 14px; height: 14px; stroke: none; }
.doctab { width: 75px; padding-left: 7px; text-align: left; background: #cce0ff; }
.addtab { width: 17px; background: #dadada; }
.addtab svg { width: 10px; height: 10px; display: block; margin: auto; }
.stage { flex: 1; min-height: 0; display: grid; grid-template: 13px 1fr / 14px 1fr; }
.corner svg { display: block; }
.hruler, .vruler { width: 100%; height: 100%; overflow: hidden; stroke: #999; background: #f4f4f4; }
.hruler { border-bottom: 1px solid #d8d8d8; }
.vruler { border-right: 1px solid #d8d8d8; }
.hruler text, .vruler text { font-size: 7px; fill: #777; stroke: none; text-anchor: middle; }
.hruler .start { text-anchor: start; }
.canvas { width: 100%; height: 100%; background: #fff; }
.thin > * { stroke: #444; stroke-width: 1px; vector-effect: non-scaling-stroke; }
.thin .node { fill: #fff; stroke: #000; }
.handle { fill: #000; stroke: none; }
.dialog { position: absolute; inset: 130px 4px 5px 713px; display: flex; flex-direction: column; border: 1px solid #777; background: #f0f0f0; box-shadow: 0 2px 9px rgba(0, 0, 0, .4); color: #111; font: 9px/12px "Liberation Sans", "DejaVu Sans", sans-serif; }
.dtitle { display: flex; align-items: center; gap: 5px; height: 24px; flex: none; padding: 0 8px 0 6px; background: #fff; font: 9px/14px "Open Sans", sans-serif; }
.dicon { width: 12px; height: 10px; stroke: none; }
.dtitle button { margin-left: auto; }
.dtitle button svg { display: block; width: 9px; height: 9px; }
.dbody { display: flex; flex: 1; min-height: 0; gap: 6px; padding: 5px 5px 0; }
.preview { flex: 1; min-width: 0; height: 100%; border: 1px solid #111; background: #fff; }
.preview text { fill: #111; stroke: none; font-size: 9px; }
.pink { stroke: #ff9db8; }
.panel { display: flex; flex-direction: column; flex: none; width: 227px; }
.presetrow { display: flex; gap: 6px; height: 31px; flex: none; }
.preset { position: relative; flex: 1; padding: 3px 5px; border: 1px solid #888; background: #fff; }
.preset label, .preset select { display: block; height: 12px; line-height: 12px; }
.preset select { font-family: "DejaVu Sans Condensed", sans-serif; font-weight: bold; }
.chev::after { content: ""; position: absolute; right: 5px; top: 50%; width: 5px; height: 5px; margin-top: -4px; border: solid #666; border-width: 0 1px 1px 0; transform: rotate(45deg); pointer-events: none; }
.gearbtn { width: 30px; border: 1px solid #aaa; background: #e1e1e1; }
.gearbtn svg { display: block; width: 20px; height: 20px; margin: auto; }
hr { flex: none; width: 100%; height: 1px; margin: 5px 0; border: 0; background: #aaa; }
.dtabs { display: flex; flex: none; align-items: flex-end; height: 16px; }
.dtabs button { height: 14px; padding: 0 3px; border: 1px solid #d9d9d9; border-bottom: 0; }
.dtabs .cur { position: relative; height: 16px; padding: 0 5px 1px; margin-bottom: -1px; background: #fff; }
.pane { display: flex; flex: 1; flex-direction: column; gap: 5px; min-height: 0; margin-right: 3px; padding: 6px 5px 8px 7px; border: 1px solid #dcdcdc; background: #fff; }
fieldset { display: flex; flex-direction: column; min-width: 0; min-height: 0; margin: 0; padding: 0 8px 0 8px; border: 1px solid #dcdcdc; }
.sheet { flex: 147 1 0; }
.place { flex: 272 1 0; }
legend { margin-left: -4px; padding: 0 1px; line-height: 12px; }
.rows { display: flex; flex-direction: column; height: 100%; padding-top: 1px; }
.sheet .rows { padding-bottom: 4px; }
.place .rows { padding-bottom: 11px; }
.row { display: flex; flex: 1 1 0; align-items: center; min-height: 0; white-space: nowrap; }
.row > label { flex: 1; min-width: 0; overflow: hidden; }
.check input { appearance: none; width: 11px; height: 11px; margin-right: 2px; border: 1px solid #444; background: #fff; }
.rule { flex: none; height: 9px; margin: 0 -2px; background: linear-gradient(#aaa, #aaa) center / 100% 1px no-repeat; }
.spin, .drop { position: relative; display: flex; align-items: center; height: 18px; border: 1px solid #7a7a7a; background: #fff; }
.spin { width: 63px; padding: 0 3px 0 4px; }
.spin input { flex: 1; min-width: 0; width: 0; background: none; }
.spin.off { border-color: #ccc; color: #888; }
.ud { display: flex; flex-direction: column; width: 10px; }
.ud button { height: 6px; background: #ddd; }
.ud button::before { content: ""; display: block; width: 0; margin: auto; border: 3px solid transparent; border-top: 0; border-bottom: 3px solid #000; }
.ud button + button::before { border-top: 3px solid #000; border-bottom: 0; }
.drop { width: 102px; margin-left: 3px; }
.drop select { padding-left: 2px; }
.progress { flex: none; height: 7px; margin: 5px 5px 0; border: 1px solid #c4c4c4; background: #e6e6e6; }
.foot { display: flex; flex: none; gap: 6px; padding: 5px; }
.orig { flex: 1; padding-left: 102px; }
.foot button { height: 18px; border: 1px solid #adadad; background: #e1e1e1; }
.showbtn { width: 91px; white-space: nowrap; }
.acts { display: flex; gap: 10px; width: 227px; }
.acts button { width: 58px; }
.acts button:last-child { margin-left: auto; }
.mark { position: absolute; right: 0; bottom: 1px; width: 86px; height: 42px; pointer-events: none; }
.mark text { fill: #fff; stroke: #aaa; stroke-width: 2px; paint-order: stroke; font: italic bold 12px/14px "Liberation Sans", sans-serif; }
.mark .com { font-size: 6px; stroke-width: 1px; }
</style>
